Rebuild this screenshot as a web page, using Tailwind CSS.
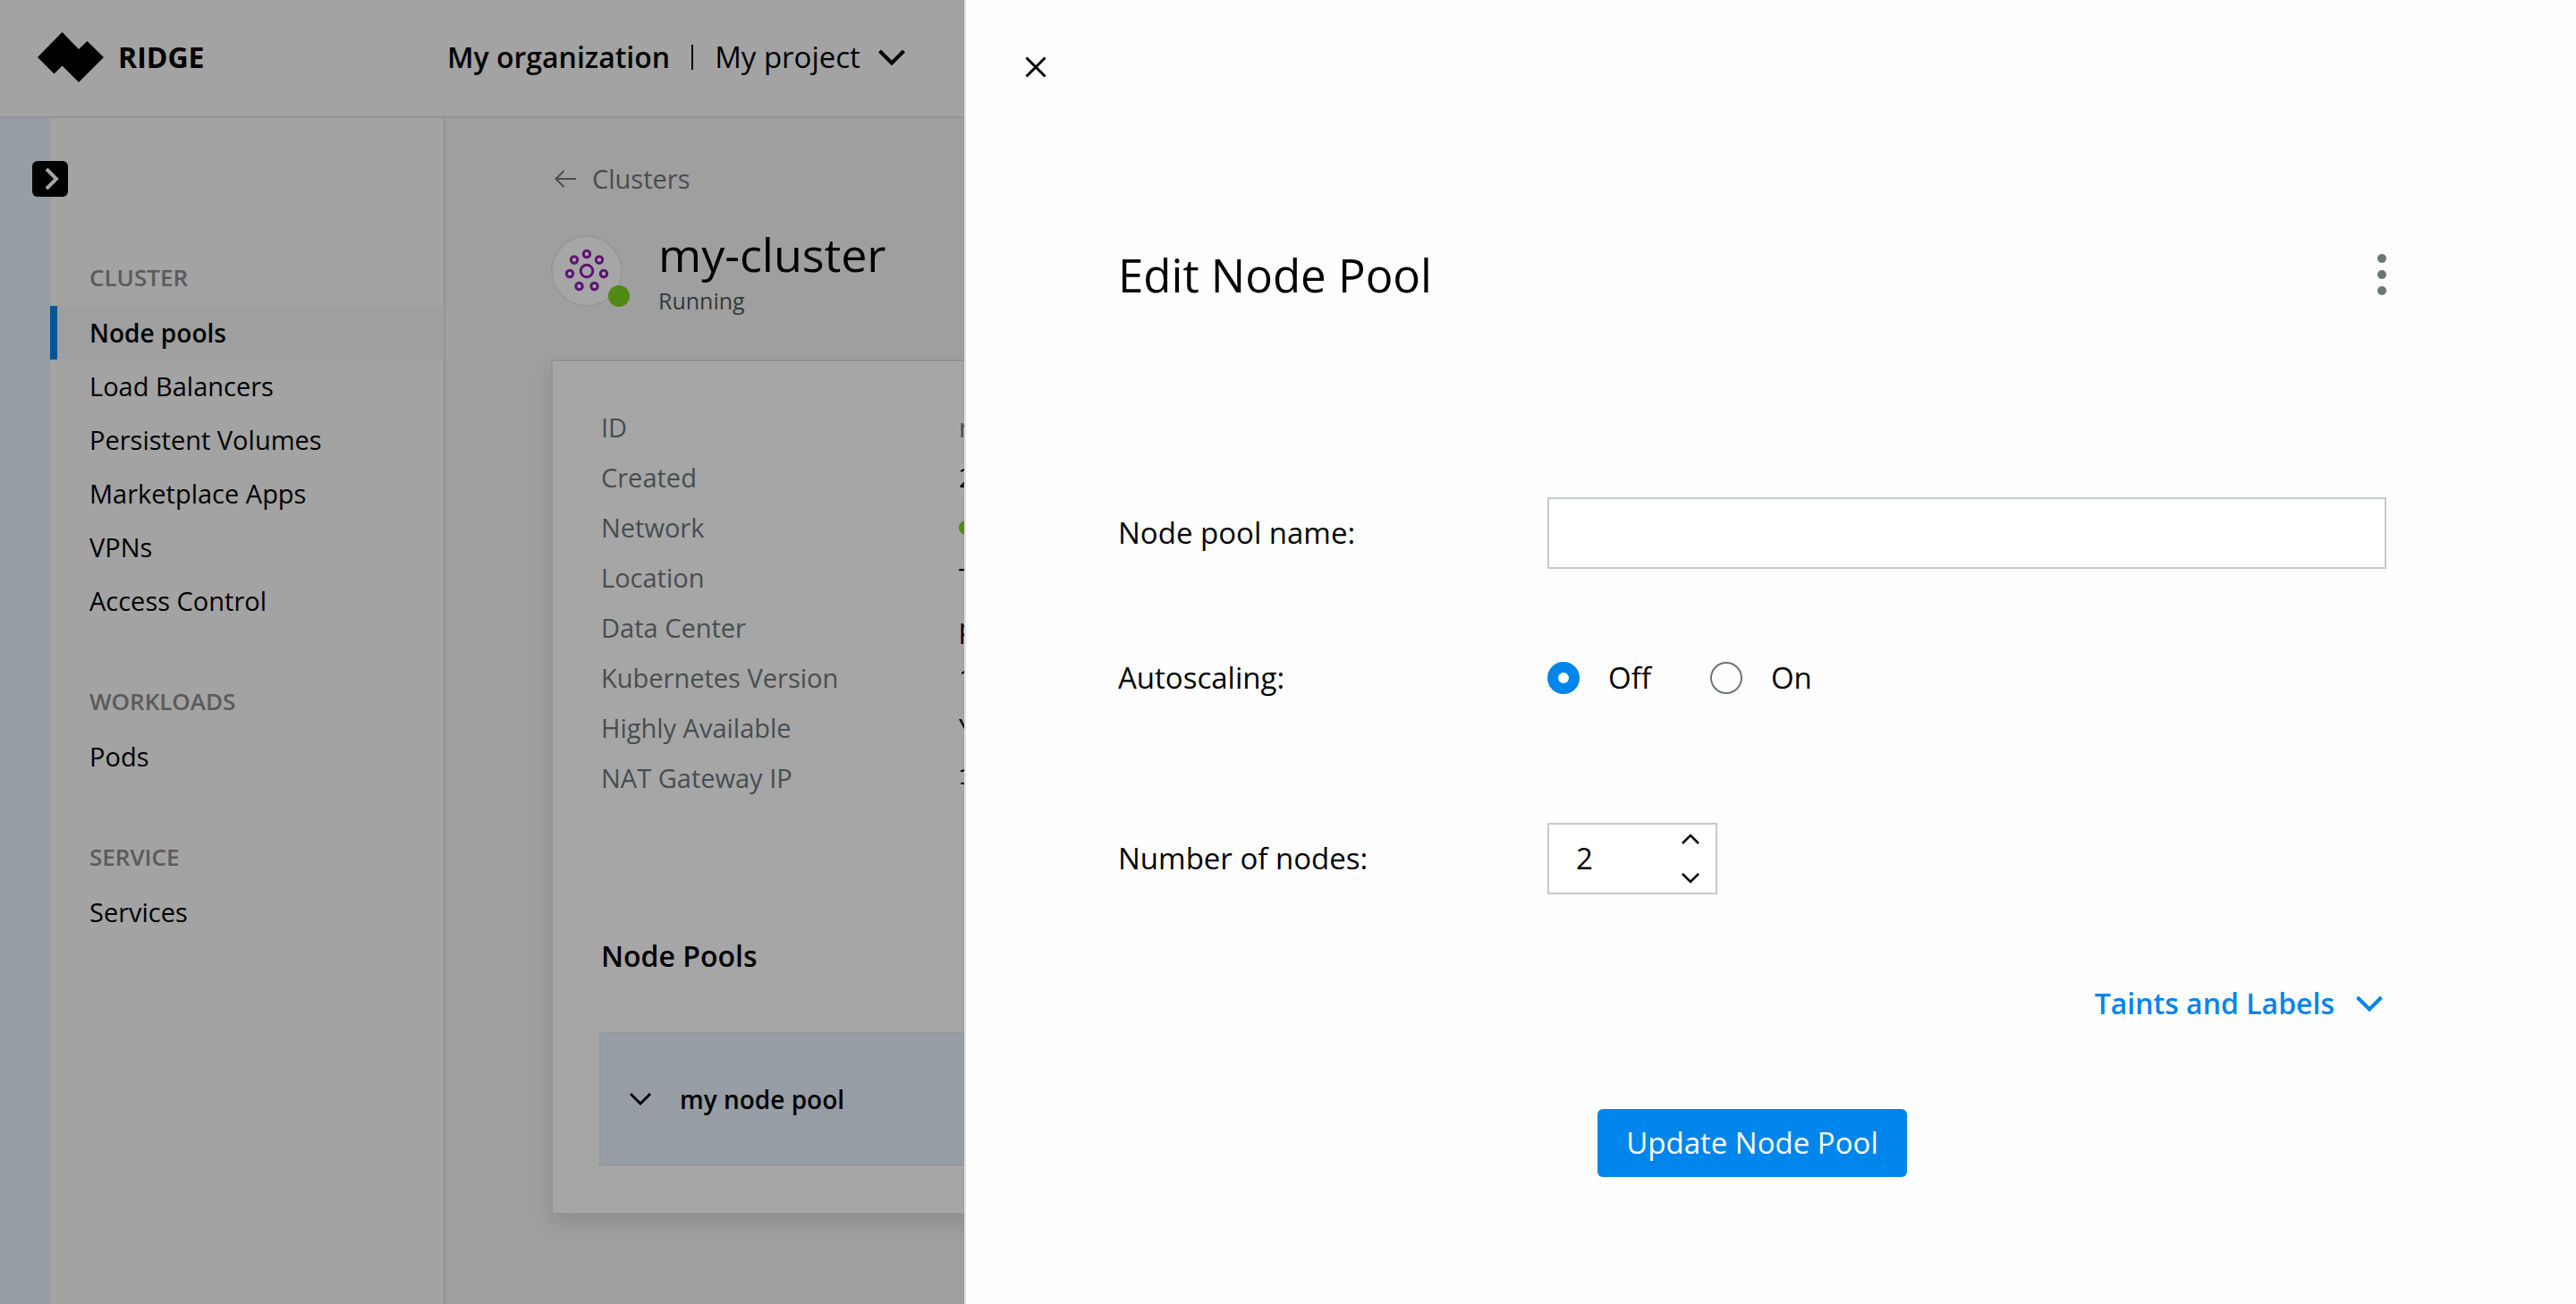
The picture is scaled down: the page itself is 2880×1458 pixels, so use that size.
<!DOCTYPE html>
<html lang="en">
<head>
<meta charset="utf-8">
<meta name="viewport" content="width=device-width, initial-scale=1">
<title>Ridge – Edit Node Pool</title>
<script src="https://cdn.jsdelivr.net/npm/@tailwindcss/browser@4"></script>
</head>
<body class="font-['Open_Sans','Noto_Sans',sans-serif] text-[29px] leading-10 text-black">
<div class="flex min-h-screen flex-col bg-[#f5f5f5]">
  <header class="flex h-[132px] items-center border-b-2 border-[#e3e3e3] bg-[#fafafa] pb-[2px] pl-[42px]">
    <a href="#" class="flex w-[458px] items-center gap-4">
      <svg class="h-14 w-[74px]" viewBox="0 0 74 56" aria-hidden="true"><path d="M0 28 27.500 0 46 19 55.500 10 74 28 46 56 27.500 37.500 18.500 46.500Z"/></svg>
      <span class="text-[32px] font-bold leading-10">RIDGE</span>
    </a>
    <button type="button" class="flex items-center text-[32px] leading-11">
      <span class="font-semibold">My organization</span>
      <span class="mx-6 h-7 w-[2px] bg-black"></span>
      <span class="text-[33px]">My project</span>
      <svg class="ml-5 h-[18px] w-[30px]" viewBox="0 0 30 18" fill="none" stroke="currentColor" stroke-width="4" aria-hidden="true"><path d="M1.500 2 15 15.500 28.500 2"/></svg>
    </button>
  </header>

  <div class="flex grow">
    <div class="relative w-14 shrink-0 bg-[#e6f1fd]">
      <button type="button" aria-label="Expand menu" class="absolute left-9 top-12 flex size-10 items-center justify-center rounded-md bg-black text-white">
        <svg class="ml-1 h-[26px] w-4" viewBox="0 0 16 26" fill="none" stroke="currentColor" stroke-width="4" aria-hidden="true"><path d="M2 2 13 13 2 24"/></svg>
      </button>
    </div>
    <nav class="w-[442px] shrink-0 border-r-2 border-[#e3e3e3] bg-[#fafafa] pt-40">
      <h2 class="mb-[14px] pl-11 text-[26px] font-semibold leading-9 text-[#8c8c8c]">CLUSTER</h2>
      <ul>
        <li><a href="#" class="flex h-[60px] items-center border-l-8 border-[#0085ec] bg-[#f5f5f5] pl-9 text-[28px] font-semibold">Node pools</a></li>
        <li><a href="#" class="flex h-[60px] items-center pl-11">Load Balancers</a></li>
        <li><a href="#" class="flex h-[60px] items-center pl-11">Persistent Volumes</a></li>
        <li><a href="#" class="flex h-[60px] items-center pl-11">Marketplace Apps</a></li>
        <li><a href="#" class="flex h-[60px] items-center pl-11">VPNs</a></li>
        <li><a href="#" class="flex h-[60px] items-center pl-11">Access Control</a></li>
      </ul>
      <h2 class="mb-[14px] mt-16 pl-11 text-[26px] font-semibold leading-9 text-[#8c8c8c]">WORKLOADS</h2>
      <ul>
        <li><a href="#" class="flex h-[60px] items-center pl-11">Pods</a></li>
      </ul>
      <h2 class="mb-[14px] mt-16 pl-11 text-[26px] font-semibold leading-9 text-[#8c8c8c]">SERVICE</h2>
      <ul>
        <li><a href="#" class="flex h-[60px] items-center pl-11">Services</a></li>
      </ul>
    </nav>

    <main class="grow px-[118px] pb-[100px] pt-12">
      <a href="#" class="inline-flex items-center gap-[18px] pl-1 align-top font-medium text-[#6e787b]">
        <svg class="h-5 w-6" viewBox="0 0 24 20" fill="none" stroke="currentColor" stroke-width="2" aria-hidden="true"><path d="M24 10H1.500M10.500 1 1.500 10l9 9"/></svg>
        Clusters
      </a>
      <div class="mt-8 flex items-center gap-10">
        <div class="relative size-20 rounded-full border-2 border-[#eaeaea] bg-white">
          <svg class="size-full text-[#921db4]" viewBox="0 0 76 76" fill="none" stroke="currentColor" stroke-width="3" aria-hidden="true">
            <circle cx="38" cy="38" r="6.800"/>
            <circle cx="38" cy="19" r="3.700"/><circle cx="24" cy="25.500" r="3.700"/><circle cx="52" cy="25.500" r="3.700"/>
            <circle cx="19" cy="41" r="3.700"/><circle cx="57" cy="41" r="3.700"/>
            <circle cx="29.500" cy="55" r="3.700"/><circle cx="46.500" cy="55" r="3.700"/>
          </svg>
          <span class="absolute -bottom-[2px] -right-[10px] size-6 rounded-full bg-[#7bd41f]"></span>
        </div>
        <div>
          <h1 class="text-[52px] font-medium leading-[64px]">my-cluster</h1>
          <p class="mt-[2px] text-[25px] leading-9 text-[#505a5c]">Running</p>
        </div>
      </div>

      <section class="mt-12 border-2 border-[#e3e3e3] bg-white px-[52px] pb-[52px] pt-[46px] shadow-[0_10px_24px_rgba(90,110,100,0.2)]">
        <dl class="grid auto-rows-[56px] grid-cols-[400px_1fr] items-center pl-[2px]">
          <dt class="font-medium text-[#6e787b]">ID</dt><dd class="text-[#6e787b]">n</dd>
          <dt class="font-medium text-[#6e787b]">Created</dt><dd>2</dd>
          <dt class="font-medium text-[#6e787b]">Network</dt><dd><span class="block size-4 rounded-full bg-[#7bd41f]"></span></dd>
          <dt class="font-medium text-[#6e787b]">Location</dt><dd>T</dd>
          <dt class="font-medium text-[#6e787b]">Data Center</dt><dd>p</dd>
          <dt class="font-medium text-[#6e787b]">Kubernetes Version</dt><dd>1</dd>
          <dt class="font-medium text-[#6e787b]">Highly Available</dt><dd>Y</dd>
          <dt class="font-medium text-[#6e787b]">NAT Gateway IP</dt><dd class="font-['Liberation_Mono',monospace]">1</dd>
        </dl>
        <h2 class="mt-[149px] pl-[2px] text-[32px] font-semibold leading-11">Node Pools</h2>
        <button type="button" class="mt-[63px] flex h-[150px] w-full items-center gap-8 border-2 border-[#eaeaea] bg-[#e6f1fd] pl-8 text-[28px] font-semibold">
          <svg class="h-4 w-6" viewBox="0 0 24 16" fill="none" stroke="currentColor" stroke-width="3" aria-hidden="true"><path d="M1 2 12 13 23 2"/></svg>
          my node pool
        </button>
      </section>
    </main>
  </div>
</div>

<div class="fixed inset-0 bg-black/35"></div>

<aside role="dialog" aria-labelledby="drawer-title" class="fixed inset-y-0 right-0 w-[calc(62.5%+2px)] overflow-y-auto border-l-2 border-[#e0e0e0] bg-[#fefefe] pl-[170px] pr-[212px] text-[33px] leading-11">
  <button type="button" aria-label="Close" class="-ml-28 mt-[55px] flex size-10 items-center justify-center">
    <svg class="size-6" viewBox="0 0 24 24" fill="none" stroke="currentColor" stroke-width="3" aria-hidden="true"><path d="M1.500 1.500l21 21M22.500 1.500l-21 21"/></svg>
  </button>
  <form>
    <div class="mt-[180px] flex items-center justify-between">
      <h2 id="drawer-title" class="text-[51px] leading-[64px]">Edit Node Pool</h2>
      <button type="button" aria-label="More actions" class="flex flex-col gap-2">
        <span class="size-[10px] rounded-full bg-[#6b7578]"></span>
        <span class="size-[10px] rounded-full bg-[#6b7578]"></span>
        <span class="size-[10px] rounded-full bg-[#6b7578]"></span>
      </button>
    </div>

    <div class="mt-[217px] grid grid-cols-[480px_1fr] items-center">
      <label for="pool-name">Node pool name:</label>
      <input id="pool-name" type="text" class="h-20 w-full border-2 border-[#c6caca] bg-white px-8 outline-none">
    </div>

    <div role="radiogroup" aria-labelledby="autoscaling" class="mt-[100px] grid grid-cols-[480px_1fr] items-center">
      <span id="autoscaling">Autoscaling:</span>
      <div class="flex items-center gap-[66px]">
        <label class="flex items-center gap-8"><input type="radio" name="autoscaling" checked class="size-9 appearance-none rounded-full border-2 border-[#6b7578] checked:border-12 checked:border-[#0085ec]">Off</label>
        <label class="flex items-center gap-8"><input type="radio" name="autoscaling" class="size-9 appearance-none rounded-full border-2 border-[#6b7578] checked:border-12 checked:border-[#0085ec]">On</label>
      </div>
    </div>

    <div class="mt-[140px] grid grid-cols-[480px_1fr] items-center">
      <label for="node-count">Number of nodes:</label>
      <div class="flex h-20 w-[190px] border-2 border-[#c6caca] bg-white">
        <input id="node-count" type="text" inputmode="numeric" value="2" class="w-0 grow bg-transparent pl-[30px] outline-none">
        <div class="flex w-14 flex-col justify-between py-2">
          <button type="button" aria-label="Increase" class="flex h-4 items-center justify-center"><svg class="h-3 w-5" viewBox="0 0 20 12" fill="none" stroke="currentColor" stroke-width="2.500" aria-hidden="true"><path d="M1 11 10 2l9 9"/></svg></button>
          <button type="button" aria-label="Decrease" class="flex h-4 items-center justify-center"><svg class="h-3 w-5" viewBox="0 0 20 12" fill="none" stroke="currentColor" stroke-width="2.500" aria-hidden="true"><path d="M1 1l9 9 9-9"/></svg></button>
        </div>
      </div>
    </div>

    <div class="mt-[100px] flex justify-end pr-1">
      <button type="button" class="flex items-center gap-6 text-[32px] font-semibold text-[#0085ec]">
        Taints and Labels
        <svg class="h-[18px] w-[30px]" viewBox="0 0 30 18" fill="none" stroke="currentColor" stroke-width="4" aria-hidden="true"><path d="M1.500 2 15 15.500 28.500 2"/></svg>
      </button>
    </div>

    <div class="mt-24 flex justify-center">
      <button type="submit" class="h-19 rounded-md bg-[#0085ec] px-8 text-[33px] font-medium text-white">Update Node Pool</button>
    </div>
  </form>
</aside>
</body>
</html>
